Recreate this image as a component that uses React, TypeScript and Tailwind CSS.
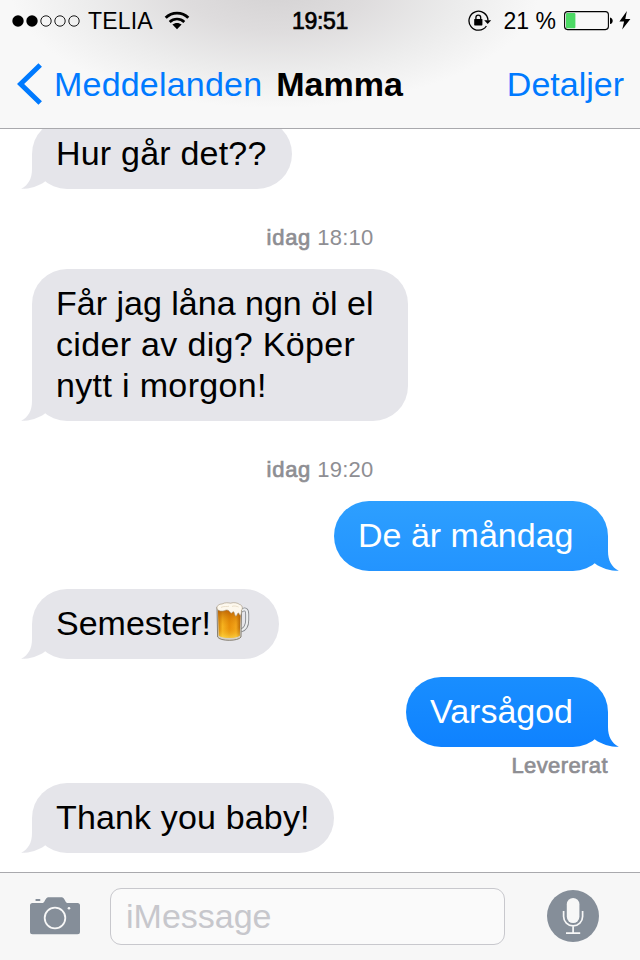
import clsx from 'clsx';

interface Line {
  text: string;
  tracking?: string;
}

interface BubbleProps {
  lines: Line[];
  width: string;
  sent?: boolean;
  fill?: string;
  tailTop?: string;
  tailBottom?: string;
  beer?: boolean;
}

const SignalDots = () => (
  <svg width="70" height="14" viewBox="0 0 70 14">
    {[7, 21, 35, 49, 63].map((cx, i) => (
      <circle
        key={cx}
        cx={cx}
        cy="7"
        r={i < 2 ? 5.7 : 5.2}
        fill={i < 2 ? '#000' : 'none'}
        stroke={i < 2 ? 'none' : '#000'}
        strokeWidth="0.9"
      />
    ))}
  </svg>
);

const WifiIcon = () => (
  <svg width="26" height="19" viewBox="0 0 26 19">
    <path d="M1.7 6.8C8 0.6 18 0.6 24.3 6.8" fill="none" stroke="#000" strokeWidth="2.9" />
    <path d="M5.7 10.9C9.8 7 16.2 7 20.3 10.9" fill="none" stroke="#000" strokeWidth="2.7" />
    <path d="M8.4 13.6C11 11.4 15 11.4 17.6 13.6L13 18.2Z" fill="#000" />
  </svg>
);

const RotationLockIcon = () => (
  <svg width="24" height="22" viewBox="0 0 24 22">
    <path d="M18.4 16A9.5 9.5 0 1 1 20 10.4" fill="none" stroke="#000" strokeWidth="1.3" />
    <path d="M16.2 10.2H23.2L19.7 14Z" fill="#000" />
    <rect x="6.2" y="9" width="8.2" height="6.4" rx="0.6" fill="#000" />
    <path d="M7.9 9.4V7.6a2.4 2.4 0 0 1 4.8 0V9.4" fill="none" stroke="#000" strokeWidth="1.3" />
  </svg>
);

const BatteryIcon = () => (
  <svg width="50" height="20" viewBox="0 0 50 20">
    <rect x="0.6" y="0.6" width="43.8" height="18" rx="3" fill="none" stroke="#000" strokeWidth="1.1" />
    <rect x="2" y="2" width="9.4" height="15.2" rx="1" fill="#4cd964" />
    <path d="M46 6.4C49.6 6.8 49.6 12.6 46 13Z" fill="#000" />
  </svg>
);

const BoltIcon = () => (
  <svg width="12" height="19" viewBox="0 0 12 19">
    <path d="M7.9 0L0.4 10.4H5.1L3.2 18.6L11.4 7.9H6.3Z" fill="#000" />
  </svg>
);

const BeerIcon = () => (
  <svg width="34" height="40" viewBox="0 0 34 40">
    <defs>
      <linearGradient id="beer" x1="0" x2="1">
        <stop offset="0" stopColor="#c87905" />
        <stop offset="0.2" stopColor="#f9b924" />
        <stop offset="0.5" stopColor="#e88f0a" />
        <stop offset="0.8" stopColor="#f4a81e" />
        <stop offset="1" stopColor="#a95c05" />
      </linearGradient>
      <linearGradient id="beerShade" x1="0" y1="0" x2="0" y2="1">
        <stop offset="0" stopColor="#a94d00" stopOpacity="0.7" />
        <stop offset="0.6" stopColor="#e89000" stopOpacity="0.1" />
        <stop offset="1" stopColor="#ffe34d" stopOpacity="0.65" />
      </linearGradient>
    </defs>
    <path d="M25 8.8C29.6 5.8 31.2 8 31.2 12V18C31.2 23.6 29.6 27 25 28.4" fill="none" stroke="#85888c" strokeWidth="4" />
    <path d="M25 8.8C29.6 5.8 31.2 8 31.2 12V18C31.2 23.6 29.6 27 25 28.4" fill="none" stroke="#eceef0" strokeWidth="2.2" />
    <path d="M1 5L1.6 35C4 39.4 22.5 39.4 25 35L25.6 5Z" fill="#d6d0c2" stroke="#7d766a" strokeWidth="0.9" />
    <path d="M2 8L2.8 33.4C6 36.6 20.5 36.6 23.8 33.4L24.6 8Z" fill="url(#beer)" />
    <path d="M2 8L2.8 33.4C6 36.6 20.5 36.6 23.8 33.4L24.6 8Z" fill="url(#beerShade)" />
    <path
      d="M1.2 7C0 3.6 3.5 2 6 2C9 0.2 12.5 0.8 14.5 1.2C18 0 22 1 23.4 2.4C26.6 3 27 6.8 25.4 8.4C25.6 12 24.4 15.4 23.2 12C22.4 9.6 21.4 11.6 20.6 13.6C19.4 15.4 18.8 12.4 18 10.2C16.6 8.4 15.8 12.6 14.4 10.6C12.4 7.4 10.4 7.6 8.2 8.8C5.6 9.4 2.4 9.2 1.2 7Z"
      fill="#fdf8ee"
      stroke="#a5957e"
      strokeWidth="0.6"
    />
    <path d="M5 5.4C8 3.8 11 5 13 4.2M16 4.4C18.6 3.4 21 4.4 22.6 5" fill="none" stroke="#e6d8c0" strokeWidth="0.8" />
  </svg>
);

const CameraIcon = () => (
  <svg width="50" height="38" viewBox="0 0 50 38">
    <rect x="5.4" y="2" width="5" height="2" rx="0.8" fill="#858e99" />
    <path
      d="M2.5 6H12.6C14.6 6 15 1 18 0.2H32C35 1 35.4 6 37.4 6H47.5Q50 6 50 8.5V34.8Q50 37.3 47.5 37.3H2.5Q0 37.3 0 34.8V8.5Q0 6 2.5 6Z"
      fill="#858e99"
    />
    <circle cx="25" cy="21" r="10.3" fill="none" stroke="#f7f7f7" strokeWidth="1.8" />
    <circle cx="39" cy="11.2" r="1.3" fill="#f7f7f7" />
  </svg>
);

const MicIcon = () => (
  <svg width="52" height="52" viewBox="0 0 52 52">
    <circle cx="26" cy="26" r="26" fill="#858e99" />
    <rect x="19.8" y="8" width="12.6" height="25" rx="6.3" fill="#f7f7f7" />
    <path d="M16.6 21V26.4a9.5 9.5 0 0 0 19 0V21M26.1 36V43M19 43.2H33.2" fill="none" stroke="#f7f7f7" strokeWidth="1.7" />
  </svg>
);

const Bubble = ({
  lines,
  width,
  sent = false,
  fill = 'bg-[#e5e5ea]',
  tailTop = '#e5e5ea',
  tailBottom = '#e5e5ea',
  beer = false,
}: BubbleProps) => (
  <div
    className={clsx(
      'relative rounded-[35px] px-6 pt-[14px] pb-[15px] text-[34px] leading-[41px] whitespace-nowrap',
      sent ? 'mr-8 self-end text-white' : 'ml-8 self-start text-black',
      fill,
      width,
    )}
  >
    {/* Tail */}
    <svg
      className={clsx('absolute bottom-0', sent ? '-right-[11px] -scale-x-100' : '-left-[11px]')}
      width="46"
      height="35"
      viewBox="-1 0 46 35"
    >
      <defs>
        <linearGradient id={`tail-${width}`} x1="0" y1="0" x2="0" y2="1">
          <stop offset="0" stopColor={tailTop} />
          <stop offset="1" stopColor={tailBottom} />
        </linearGradient>
      </defs>
      <path
        d="M10 0V15C10 24.5 6.5 31 -0.8 34.8C8 34.8 17 32 23 27.4L30 20V0Z"
        fill={`url(#tail-${width})`}
      />
    </svg>
    <div className="relative">
      {lines.map((line) => (
        <div key={line.text} className={clsx('flex items-center', line.tracking)}>
          {line.text}
          {beer && (
            <span className="-mt-[3px] ml-[5px]">
              <BeerIcon />
            </span>
          )}
        </div>
      ))}
    </div>
  </div>
);

const Timestamp = ({ time }: { time: string }) => (
  <div className="mt-[37px] mb-[19px] h-6 text-center text-[22px] leading-6 tracking-[0.2px] text-[#8e8e93]">
    <span className="tracking-[0.7px] [-webkit-text-stroke:0.7px_#8e8e93]">idag</span> {time}
  </div>
);

const App = () => {
  return (
    <div className="flex h-[960px] w-[640px] flex-col overflow-hidden bg-white font-['Liberation_Sans',Arial,sans-serif] text-black">
      <header className="relative z-10 h-[129px] shrink-0 border-b border-[#a9a9ad] bg-[#f8f8f8] bg-[radial-gradient(ellipse_265px_120px_at_275px_-12px,#d4d2d3_0%,#dedcdd_35%,#ececec_70%,#f8f8f8_100%)]">
        {/* Status bar */}
        <div className="grid h-10 grid-cols-[1fr_auto_1fr] items-center pr-[9px] pl-[11px] text-[23px] leading-10">
          <div className="flex items-center">
            <SignalDots />
            <span className="mt-px ml-[7px] tracking-[0.2px]">TELIA</span>
            <span className="ml-[11px]">
              <WifiIcon />
            </span>
          </div>
          <span className="mt-px mr-[2px] tracking-[-0.3px] [-webkit-text-stroke:0.7px_#000]">19:51</span>
          <div className="flex items-center justify-end">
            <RotationLockIcon />
            <span className="mt-px ml-[12px]">21 %</span>
            <span className="ml-[8px]">
              <BatteryIcon />
            </span>
            <span className="ml-[5px]">
              <BoltIcon />
            </span>
          </div>
        </div>

        {/* Navigation */}
        <div className="flex h-[88px] items-center pr-4 pl-[17px] text-[34px] leading-[88px]">
          <svg width="26" height="42" viewBox="0 0 26 42">
            <path d="M23.2 2L3.6 21L23.2 40" fill="none" stroke="#007aff" strokeWidth="5" />
          </svg>
          <span className="ml-[11px] tracking-[0.2px] text-[#007aff]">Meddelanden</span>
          <span className="ml-[14px] font-bold">Mamma</span>
          <span className="ml-auto text-[#007aff]">Detaljer</span>
        </div>
      </header>

      {/* Conversation */}
      <main className="-mt-[10px] flex flex-1 flex-col">
        <Bubble width="w-[260px]" lines={[{ text: 'Hur går det??', tracking: 'tracking-[0.2px]' }]} />
        <Timestamp time="18:10" />
        <Bubble
          width="w-[376px]"
          lines={[
            { text: 'Får jag låna ngn öl el' },
            { text: 'cider av dig? Köper', tracking: 'tracking-[0.33px]' },
            { text: 'nytt i morgon!', tracking: 'tracking-[0.35px]' },
          ]}
        />
        <Timestamp time="19:20" />
        <Bubble
          sent
          width="w-[274px]"
          fill="bg-linear-to-b from-[#2d9fff] to-[#2394ff]"
          tailTop="#2899ff"
          tailBottom="#2394ff"
          lines={[{ text: 'De är måndag' }]}
        />
        <div className="h-[18px]" />
        <Bubble width="w-[247px]" beer lines={[{ text: 'Semester!' }]} />
        <div className="h-[18px]" />
        <Bubble
          sent
          width="w-[202px]"
          fill="bg-linear-to-b from-[#198eff] to-[#0f82ff]"
          tailTop="#1488ff"
          tailBottom="#0f82ff"
          lines={[{ text: 'Varsågod' }]}
        />
        <div className="mt-[7px] mr-8 mb-[5px] h-6 text-right text-[22px] leading-6 tracking-[0.4px] text-[#8e8e93] [-webkit-text-stroke:0.7px_#8e8e93]">
          Levererat
        </div>
        <Bubble width="w-[302px]" lines={[{ text: 'Thank you baby!', tracking: 'tracking-[0.15px]' }]} />
      </main>

      {/* Message input */}
      <footer className="flex h-[88px] shrink-0 items-center border-t border-[#a9a9ad] bg-[#f7f7f7] pr-[41px] pl-[30px]">
        <span className="mb-[2px]">
          <CameraIcon />
        </span>
        <div className="ml-[30px] h-[57px] w-[395px] rounded-[11px] border border-[#c8c8cd] bg-[#fafafa] pl-[15px] text-[34px] leading-[55px] text-[#c7c7cc]">
          iMessage
        </div>
        <span className="mb-[2px] ml-auto">
          <MicIcon />
        </span>
      </footer>
    </div>
  );
};

export default App;
